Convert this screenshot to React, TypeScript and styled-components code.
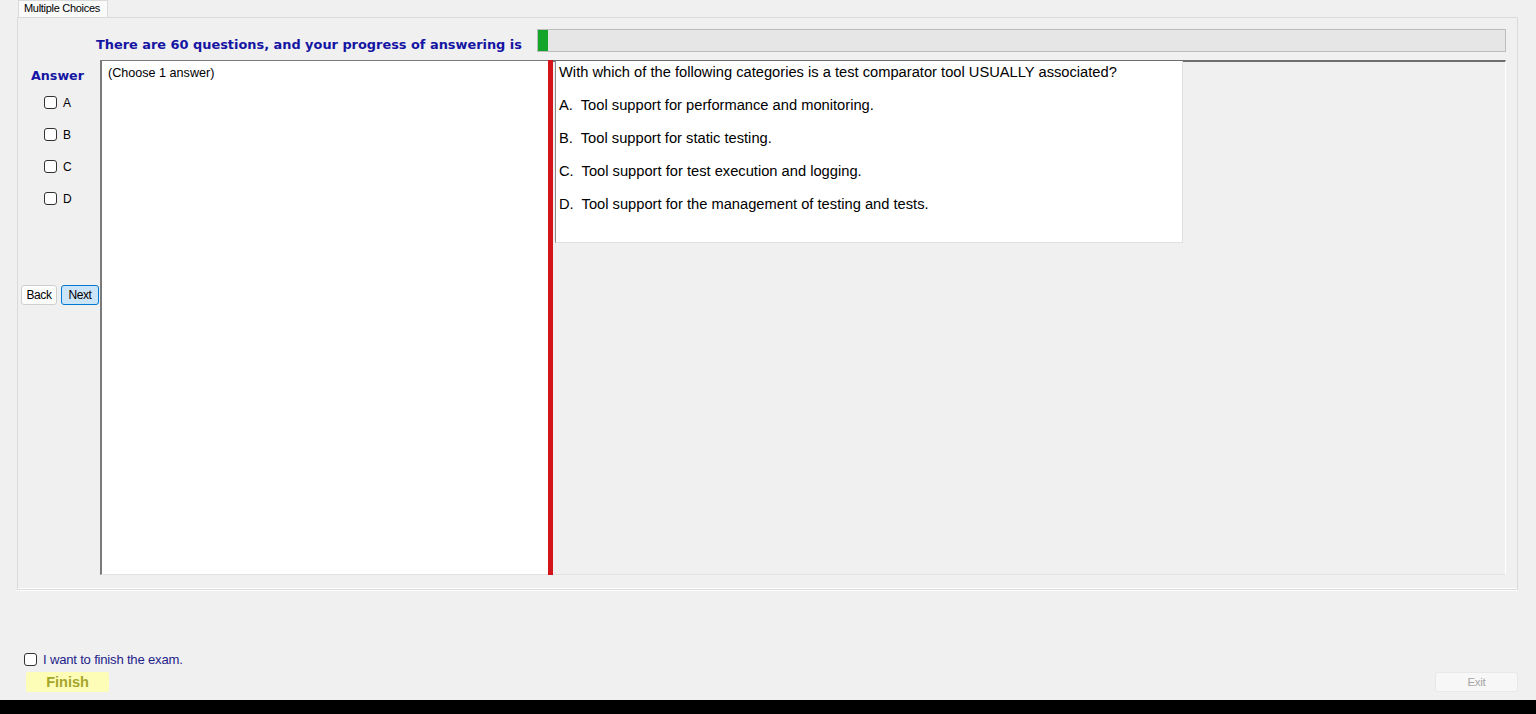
import styled, { createGlobalStyle } from "styled-components"

const GlobalStyle = createGlobalStyle`
  html, body {
    margin: 0;
    padding: 0;
    background: #f0f0f0;
    overflow: hidden;
  }
  body {
    font-family: "Liberation Sans", Arial, sans-serif;
  }
`

const Page = styled.div`
  width: 1536px;
  height: 714px;
  display: flex;
  flex-direction: column;
  background: #f0f0f0;
`

const TabStrip = styled.div`
  height: 17px;
  display: flex;
  padding-left: 18px;
`

const Tab = styled.div`
  height: 17px;
  box-sizing: border-box;
  padding: 0 7px 0 5px;
  background: #fafafa;
  border: 1px solid #dadada;
  border-bottom: none;
  font-size: 11px;
  letter-spacing: -0.3px;
  line-height: 14px;
  color: #000;
`

const TabPanel = styled.div`
  margin: 0 18px 0 17px;
  height: 573px;
  box-sizing: border-box;
  border: 1px solid #dadada;
  box-shadow: inset 0 -1px 0 #fff, 0 1px 0 #fff;
  padding: 11px 11px 13px 0;
  display: flex;
  flex-direction: column;
`

const HeaderRow = styled.div`
  height: 23px;
  display: flex;
  align-items: center;
`

const HeaderText = styled.div`
  width: 441px;
  padding-left: 78px;
  font-family: "DejaVu Sans", Verdana, sans-serif;
  font-weight: bold;
  font-size: 12.9px;
  color: #1515a3;
  padding-top: 8px;
`

const ProgressTrack = styled.div`
  flex: 1;
  height: 23px;
  box-sizing: border-box;
  background: #e6e6e6;
  border: 1px solid #bcbcbc;
  display: flex;
`

const ProgressFill = styled.div`
  height: 100%;
  background: #12a52a;
`

const Main = styled.div`
  margin-top: 8px;
  height: 515px;
  display: flex;
`

const AnswerColumn = styled.div`
  width: 82px;
  display: flex;
  flex-direction: column;
  padding-left: 3px;
  box-sizing: border-box;
`

const AnswerTitle = styled.div`
  font-family: "DejaVu Sans", Verdana, sans-serif;
  font-weight: bold;
  font-size: 12.7px;
  color: #1515a3;
  padding-left: 10px;
  margin-top: 8px;
  height: 20px;
`

const ChoiceList = styled.div`
  display: flex;
  flex-direction: column;
  gap: 19px;
  padding-left: 23px;
  margin-top: 8px;
`

const ChoiceRow = styled.label`
  display: flex;
  align-items: center;
  gap: 6px;
  height: 13px;
  font-size: 12px;
  color: #000;
`

const CheckBox = styled.span`
  width: 13px;
  height: 13px;
  box-sizing: border-box;
  border: 1px solid #333;
  border-radius: 3px;
  background: #fff;
  flex-shrink: 0;
`

const NavRow = styled.div`
  display: flex;
  gap: 4px;
  margin-top: 80px;
`

const NavButton = styled.button<{ $primary?: boolean }>`
  height: 20px;
  padding: 0;
  width: ${p => (p.$primary ? "38px" : "36px")};
  box-sizing: border-box;
  font-family: "Liberation Sans", Arial, sans-serif;
  font-size: 12px;
  letter-spacing: -0.4px;
  color: #000;
  border-radius: 3px;
  border: 1px solid ${p => (p.$primary ? "#0078d4" : "#cfcfcf")};
  background: ${p => (p.$primary ? "#cce4f7" : "#fdfdfd")};
`

const ChoosePanel = styled.div`
  width: 448px;
  box-sizing: border-box;
  background: #fff;
  border-top: 1px solid #7a7a7a;
  border-left: 2px solid #7a7a7a;
  border-bottom: 1px solid #e3e3e3;
  padding: 5px 6px;
  font-size: 12.6px;
  color: #000;
`

const Divider = styled.div`
  width: 5px;
  background: #d4141b;
`

const QuestionArea = styled.div`
  flex: 1;
  box-sizing: border-box;
  border-top: 2px solid #6e6e6e;
  border-right: 1px solid #fff;
  border-bottom: 1px solid #e3e3e3;
  padding-left: 2px;
`

const QuestionBox = styled.div`
  width: 628px;
  height: 182px;
  box-sizing: border-box;
  background: #fff;
  border-left: 1px solid #8a8a8a;
  border-right: 1px solid #e0e0e0;
  border-bottom: 1px solid #e0e0e0;
  margin-top: -1px;
  padding: 2px 0 0 3px;
  display: flex;
  flex-direction: column;
  gap: 15px;
  font-size: 14.7px;
  color: #000;
`

const QuestionLine = styled.div`
  height: 18px;
  line-height: 18px;
  white-space: pre;
`

const Footer = styled.div`
  flex: 1;
  display: flex;
  flex-direction: column;
  justify-content: flex-end;
  padding: 0 18px 8px 24px;
`

const FinishCheck = styled.label`
  display: flex;
  align-items: center;
  gap: 6px;
  font-size: 13.1px;
  letter-spacing: -0.2px;
  color: #1e1e8a;
  height: 14px;
`

const ButtonRow = styled.div`
  display: flex;
  justify-content: space-between;
  margin-top: 6px;
`

const FinishButton = styled.div`
  margin-left: 2px;
  width: 83px;
  height: 20px;
  background: #fdfdb8;
  color: #a5a52a;
  font-weight: bold;
  font-size: 14.5px;
  display: flex;
  align-items: center;
  justify-content: center;
  border-radius: 2px;
`

const ExitButton = styled.div`
  width: 83px;
  height: 20px;
  box-sizing: border-box;
  background: #f7f7f7;
  border: 1px solid #e8e8e8;
  border-radius: 3px;
  color: #a6a6a6;
  font-size: 11.5px;
  letter-spacing: -0.3px;
  display: flex;
  align-items: center;
  justify-content: center;
`

const Taskbar = styled.div`
  height: 14px;
  background: #000;
  flex-shrink: 0;
`

const choices = ["A", "B", "C", "D"]

const question = "With which of the following categories is a test comparator tool USUALLY associated?"

const options = [
  "A.  Tool support for performance and monitoring.",
  "B.  Tool support for static testing.",
  "C.  Tool support for test execution and logging.",
  "D.  Tool support for the management of testing and tests.",
]

const total = 60
const progressPct = 1

export default function App() {
  return (
    <Page>
      <GlobalStyle />
      <TabStrip>
        <Tab>Multiple Choices</Tab>
      </TabStrip>
      <TabPanel>
        <HeaderRow>
          <HeaderText>There are {total} questions, and your progress of answering is</HeaderText>
          <ProgressTrack>
            <ProgressFill style={{ width: `${progressPct}%` }} />
          </ProgressTrack>
        </HeaderRow>
        <Main>
          <AnswerColumn>
            <AnswerTitle>Answer</AnswerTitle>
            <ChoiceList>
              {choices.map(c => (
                <ChoiceRow key={c}>
                  <CheckBox />
                  {c}
                </ChoiceRow>
              ))}
            </ChoiceList>
            <NavRow>
              <NavButton>Back</NavButton>
              <NavButton $primary>Next</NavButton>
            </NavRow>
          </AnswerColumn>
          <ChoosePanel>(Choose 1 answer)</ChoosePanel>
          <Divider />
          <QuestionArea>
            <QuestionBox>
              <QuestionLine>{question}</QuestionLine>
              {options.map(o => (
                <QuestionLine key={o}>{o}</QuestionLine>
              ))}
            </QuestionBox>
          </QuestionArea>
        </Main>
      </TabPanel>
      <Footer>
        <FinishCheck>
          <CheckBox />
          I want to finish the exam.
        </FinishCheck>
        <ButtonRow>
          <FinishButton>Finish</FinishButton>
          <ExitButton>Exit</ExitButton>
        </ButtonRow>
      </Footer>
      <Taskbar />
    </Page>
  )
}
